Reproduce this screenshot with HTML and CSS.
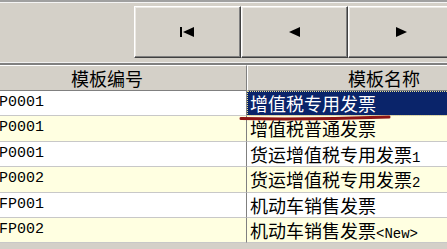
FILE: index.html
```html
<!DOCTYPE html>
<html lang="zh">
<head>
    <meta charset="UTF-8">
    <title>模板</title>
    <link rel="stylesheet" href="styles.css">
</head>
<body>
<div class="frame">
    <div class="toolbar">
        <button class="nav-btn">
            <svg width="15" height="10" viewBox="0 0 15 10"><rect x="0" y="0" width="2" height="10" fill="#000"/><polygon points="3,5 14,0 14,10" fill="#000"/></svg>
        </button>
        <button class="nav-btn">
            <svg width="11" height="10" viewBox="0 0 11 10"><polygon points="0,5 11,0 11,10" fill="#000"/></svg>
        </button>
        <button class="nav-btn">
            <svg width="11" height="10" viewBox="0 0 11 10"><polygon points="11,5 0,0 0,10" fill="#000"/></svg>
        </button>
    </div>
    <div class="rule"></div>

    <div class="grid">
        <div class="head">
            <div class="hcell">模板编号</div>
            <div class="hcell">模板名称</div>
        </div>
        <div class="row">
            <div class="cell code">P0001</div>
            <div class="cell name selected">增值税专用发票</div>
        </div>
        <div class="row alt">
            <div class="cell code">P0001</div>
            <div class="cell name">增值税普通发票</div>
        </div>
        <div class="row">
            <div class="cell code">P0001</div>
            <div class="cell name">货运增值税专用发票<span class="small">1</span></div>
        </div>
        <div class="row alt">
            <div class="cell code">P0002</div>
            <div class="cell name">货运增值税专用发票<span class="small">2</span></div>
        </div>
        <div class="row">
            <div class="cell code">FP001</div>
            <div class="cell name">机动车销售发票</div>
        </div>
        <div class="row alt">
            <div class="cell code">FP002</div>
            <div class="cell name">机动车销售发票<span class="small">&lt;New&gt;</span></div>
        </div>
    </div>

    <!-- hand drawn mark under the selected row -->
    <svg class="mark" width="447" height="249" viewBox="0 0 447 249">
        <path d="M241 118.5 C 290 119.5, 345 118.5, 389 117" fill="none" stroke="#8c1414" stroke-width="3" stroke-linecap="round"/>
    </svg>
</div>
</body>
</html>
```

FILE: styles.css
```css
body {
    margin: 0;
    overflow: hidden;
    background: #d4d0c8;
}

.frame {
    position: relative;
    width: 447px;
    height: 249px;
    overflow: hidden;
}

.toolbar {
    display: flex;
    height: 56px;
    padding: 4px 0 0 134px;
    border-top: 2px solid #a0a0a0;
    box-shadow: inset 0 1px #f4f4f4;
    box-sizing: content-box;
}

.nav-btn {
    flex: none;
    width: 107px;
    height: 52px;
    margin: 0;
    padding: 0;
    display: flex;
    align-items: center;
    justify-content: center;
    background: #d4d0c8;
    border: none;
    border-top: 1px solid #fff;
    border-left: 1px solid #fff;
    border-right: 1px solid #404040;
    border-bottom: 1px solid #404040;
    box-shadow: inset -1px -1px #808080, inset 1px 1px #ece9e4;
}

.rule {
    height: 2px;
    border-top: 1px solid #f0f0f0;
    background: #808080;
}

.grid {
    margin-left: -33px;
    width: 554px;
    font-family: "Noto Sans CJK SC", sans-serif;
}

.head,
.row {
    display: grid;
    grid-template-columns: 280px 274px;
}

.hcell {
    height: 26px;
    box-sizing: border-box;
    background: #d4d0c8;
    border-top: 1px solid #fff;
    border-left: 1px solid #fff;
    border-right: 1px solid #808080;
    border-bottom: 1px solid #808080;
    font-size: 18px;
    line-height: 24px;
    text-align: center;
    color: #000;
}

.row {
    height: 25.4px;
    background: #fff;
}

.row.alt {
    background: #ffffe1;
}

.cell {
    box-sizing: border-box;
    border-bottom: 1px solid #c8c8c8;
    color: #000;
    white-space: nowrap;
    overflow: hidden;
}

.code {
    padding-left: 32px;
    border-right: 1px solid #808080;
    font-family: "Liberation Mono", monospace;
    font-size: 15px;
    line-height: 24px;
}

.name {
    padding-left: 3px;
    font-size: 18px;
    line-height: 24px;
}

.small {
    font-family: "Liberation Mono", monospace;
    font-size: 14px;
}

.selected {
    background: #0a246a;
    color: #fff;
    outline: 1px dotted #e8e090;
    outline-offset: -1px;
}

.mark {
    position: absolute;
    left: 0;
    top: 0;
    pointer-events: none;
}
```
